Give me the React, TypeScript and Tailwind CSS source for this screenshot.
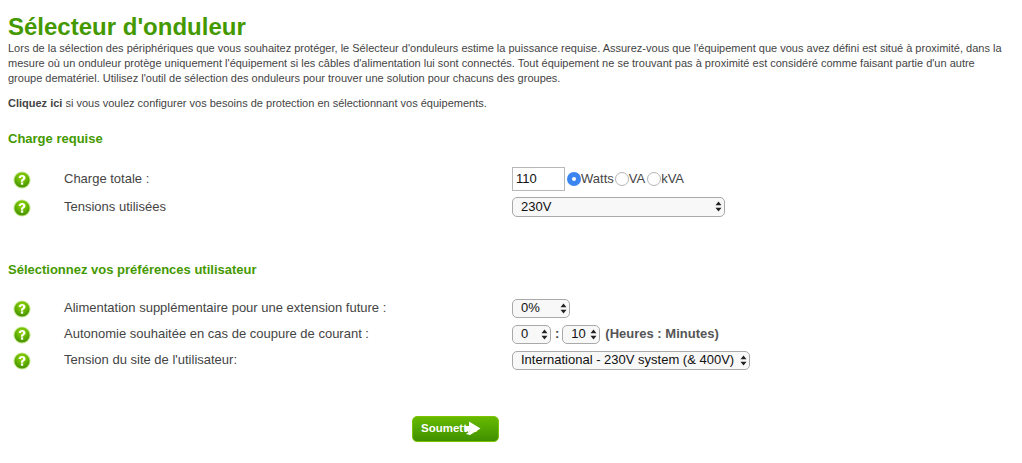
import React from "react";

const Help = () => (
  <svg width="18" height="18" viewBox="0 0 18 18" className="block">
    <defs>
      <radialGradient id="hg" cx="50%" cy="30%" r="70%">
        <stop offset="0%" stopColor="#9ade00" />
        <stop offset="65%" stopColor="#5cab00" />
        <stop offset="100%" stopColor="#468f00" />
      </radialGradient>
    </defs>
    <circle cx="9" cy="9" r="8.6" fill="#c3e88a" />
    <circle cx="9" cy="9" r="7.5" fill="url(#hg)" />
    <path d="M5.6 7C5.7 4.9 7.2 3.9 9.1 3.9c2 0 3.4 1.1 3.4 2.8 0 1.3-.7 1.9-1.5 2.5-.7.5-.9.8-.9 1.5H7.9c0-1.3.4-2 1.3-2.7.6-.5.9-.7.9-1.3 0-.6-.4-.9-1-.9-.7 0-1.1.5-1.2 1.2z" fill="#fff" />
    <rect x="7.9" y="11.4" width="2.3" height="2.3" fill="#fff" />
  </svg>
);

const Arrows = () => (
  <svg width="7" height="11" viewBox="0 0 7 11" className="block">
    <path d="M3.5 0.5 L6.5 4.2 H0.5 Z M3.5 10.5 L6.5 6.8 H0.5 Z" fill="#222" />
  </svg>
);

const Sel = ({ value, w, h = "h-[19px]" }: { value: string; w: string; h?: string }) => (
  <span className={`relative inline-block ${h} ${w}`}>
    <select
      defaultValue={value}
      className="block h-full w-full appearance-none rounded-[5px] border border-[#a9a9a9] bg-[#f8f8f8] pb-[2px] pl-[8px] pr-3 text-[13px] leading-[15px] text-[#111] outline-none"
    >
      <option>{value}</option>
    </select>
    <span className="pointer-events-none absolute right-[3px] top-[4px]">
      <Arrows />
    </span>
  </span>
);

const Radio = ({ on }: { on?: boolean }) =>
  on ? (
    <span className="flex h-[14px] w-[14px] shrink-0 items-center justify-center rounded-full bg-[#3b85f0]">
      <span className="h-[4px] w-[4px] rounded-full bg-white" />
    </span>
  ) : (
    <span className="h-[14px] w-[14px] shrink-0 rounded-full border border-[#b5b5b5] bg-white" />
  );

const Row = ({ label, h, children }: { label: string; h: string; children: React.ReactNode }) => (
  <div className={`flex items-center ${h}`}>
    <div className="ml-[13px] mt-[2px] w-[51px] shrink-0">
      <Help />
    </div>
    <div className="w-[448px] shrink-0 pb-[1px] text-[13px] text-[#444]">{label}</div>
    <div className="flex items-center">{children}</div>
  </div>
);

const H2 = ({ children, mt }: { children: React.ReactNode; mt: string }) => (
  <h2 className={`ml-2 text-[13px] font-bold leading-[16px] text-[#449900] ${mt}`}>{children}</h2>
);

export default function App() {
  return (
    <div className="h-[463px] w-[1022px] overflow-hidden bg-white pt-[12px] font-['Liberation_Sans',Arial,sans-serif] text-[#444]">
      <h1 className="ml-2 text-[24px] font-bold leading-[29px] text-[#449900]">Sélecteur d'onduleur</h1>
      <p className="mx-2 w-[1002px] text-[11px] leading-[15px]">
        Lors de la sélection des périphériques que vous souhaitez protéger, le Sélecteur d'onduleurs estime la puissance requise. Assurez-vous que l'équipement que vous avez défini est situé à proximité, dans la mesure où un onduleur protège uniquement l'équipement si les câbles d'alimentation lui sont connectés. Tout équipement ne se trouvant pas à proximité est considéré comme faisant partie d'un autre groupe dematériel. Utilisez l'outil de sélection des onduleurs pour trouver une solution pour chacuns des groupes.
      </p>
      <p className="mx-2 mt-[10px] text-[11px] leading-[15px]">
        <b>Cliquez ici</b> si vous voulez configurer vos besoins de protection en sélectionnant vos équipements.
      </p>
      <H2 mt="mt-[20px]">Charge requise</H2>
      <div className="mt-[18px]">
        <Row label="Charge totale :" h="h-[28px]">
          <input
            defaultValue="110"
            className="h-[24px] w-[53px] border border-[#b8b8b8] bg-white pb-[2px] pl-[3px] text-[13px] text-[#111] outline-none"
          />
          <span className="ml-[2px] flex items-center text-[13px] text-[#444]">
            <Radio on />
            <span>Watts</span>
            <span className="ml-[1px] flex"><Radio /></span>
            <span>VA</span>
            <span className="ml-[2px] flex"><Radio /></span>
            <span>kVA</span>
          </span>
        </Row>
        <Row label="Tensions utilisées" h="h-[28px]">
          <Sel value="230V" w="w-[213px]" h="h-[20px]" />
        </Row>
      </div>
      <H2 mt="mt-[41px]">Sélectionnez vos préférences utilisateur</H2>
      <div className="mt-[17px]">
        <Row label="Alimentation supplémentaire pour une extension future :" h="h-[26px]">
          <Sel value="0%" w="w-[58px]" />
        </Row>
        <Row label="Autonomie souhaitée en cas de coupure de courant :" h="h-[26px]">
          <Sel value="0" w="w-[39px]" />
          <span className="ml-[4px] mr-[3px] text-[13px] font-bold">:</span>
          <Sel value="10" w="w-[38px]" />
          <span className="ml-[5px] text-[13px] font-bold text-[#555]">(Heures : Minutes)</span>
        </Row>
        <Row label="Tension du site de l'utilisateur:" h="h-[26px]">
          <Sel value="International - 230V system (& 400V)" w="w-[238px]" />
        </Row>
      </div>
      <div className="ml-[412px] mt-[43px]">
        <button className="relative flex h-[26px] w-[87px] items-center rounded-[5px] border border-[#7cc400] bg-gradient-to-b from-[#66bb00] to-[#3f9000] pl-2 text-[11.5px] font-bold text-white">
          <span>Soumettre</span>
          <svg width="17" height="15" viewBox="0 0 17 15" className="absolute left-[51px] top-[4px]">
            <path d="M1 5 H5 V0.5 L16.5 7.5 L6 14 L2 13 L6 10 H1 Z" fill="#fff" />
          </svg>
        </button>
      </div>
    </div>
  );
}
